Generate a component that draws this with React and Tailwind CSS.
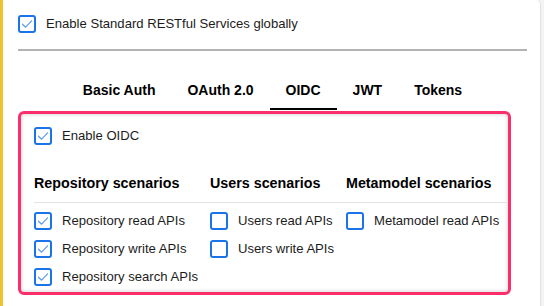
import React from "react";

function Box({ checked }) {
  return (
    <span className="w-[18px] h-[18px] shrink-0 rounded-[3px] border-2 border-[#1a73e8] bg-white flex items-center justify-center">
      {checked && (
        <svg width="12" height="10" viewBox="0 0 12 10" fill="none">
          <path d="M1.5 5.2 L4.6 8.2 L10.6 1.8" stroke="#5a9ced" strokeWidth="1.2" strokeLinecap="round" strokeLinejoin="round" />
        </svg>
      )}
    </span>
  );
}

function Row({ checked, label }) {
  return (
    <div className="h-[28px] flex items-center gap-[10px]">
      <Box checked={checked} />
      <span className="text-[13.1px] text-[#1c1c1c] whitespace-nowrap">{label}</span>
    </div>
  );
}

export default function App() {
  const tabs = ["Basic Auth", "OAuth 2.0", "OIDC", "JWT", "Tokens"];
  return (
    <div
      className="w-[544px] h-[306px] flex bg-[#f3f3f3] overflow-hidden"
      style={{ fontFamily: '"Liberation Sans", Arial, sans-serif' }}
    >
      <div className="w-[3px] bg-[#f2c12e] shrink-0" />
      <div className="w-[538px] shrink-0 bg-white rounded-tr-[5px] border-r border-[#e2e2e2] pl-[15px] pr-[13px] pt-[15px]">
        <div className="flex items-center gap-[10px] h-[18px]">
          <Box checked />
          <span className="text-[13.1px] text-[#1c1c1c]">Enable Standard RESTful Services globally</span>
        </div>
        <div className="mt-[16px] h-[2px] bg-[#b3b3b3]" />
        <div className="mt-[18px] flex justify-center">
          {tabs.map((t) => (
            <div
              key={t}
              className={
                "px-4 pt-[11px] pb-[8px] text-[14px] font-bold leading-[20px] text-black border-b-2 " +
                (t === "OIDC" ? "border-black" : "border-transparent")
              }
            >
              {t}
            </div>
          ))}
        </div>
        <div className="mt-[1px] w-[493px] h-[184px] border-[3px] border-[#fb2e6c] rounded-[6px] shadow-[inset_0_0_4px_rgba(0,0,0,0.22)] pl-[13px] pt-[13px]">
          <div className="flex items-center gap-[10px] h-[18px]">
            <Box checked />
            <span className="text-[13.1px] text-[#1c1c1c]">Enable OIDC</span>
          </div>
          <div className="mt-[28px] flex gap-3 border-b border-[#e2e2e2] pb-[9px]">
            <div className="w-[164px] text-[14.3px] font-bold leading-[20px] text-black">Repository scenarios</div>
            <div className="w-[124px] text-[14.3px] font-bold leading-[20px] text-black">Users scenarios</div>
            <div className="text-[14.3px] font-bold leading-[20px] text-black">Metamodel scenarios</div>
          </div>
          <div className="mt-[4px] flex gap-3">
            <div className="w-[164px] flex flex-col">
              <Row checked label="Repository read APIs" />
              <Row checked label="Repository write APIs" />
              <Row checked label="Repository search APIs" />
            </div>
            <div className="w-[124px] flex flex-col">
              <Row label="Users read APIs" />
              <Row label="Users write APIs" />
            </div>
            <div className="flex flex-col">
              <Row label="Metamodel read APIs" />
            </div>
          </div>
        </div>
      </div>
    </div>
  );
}
